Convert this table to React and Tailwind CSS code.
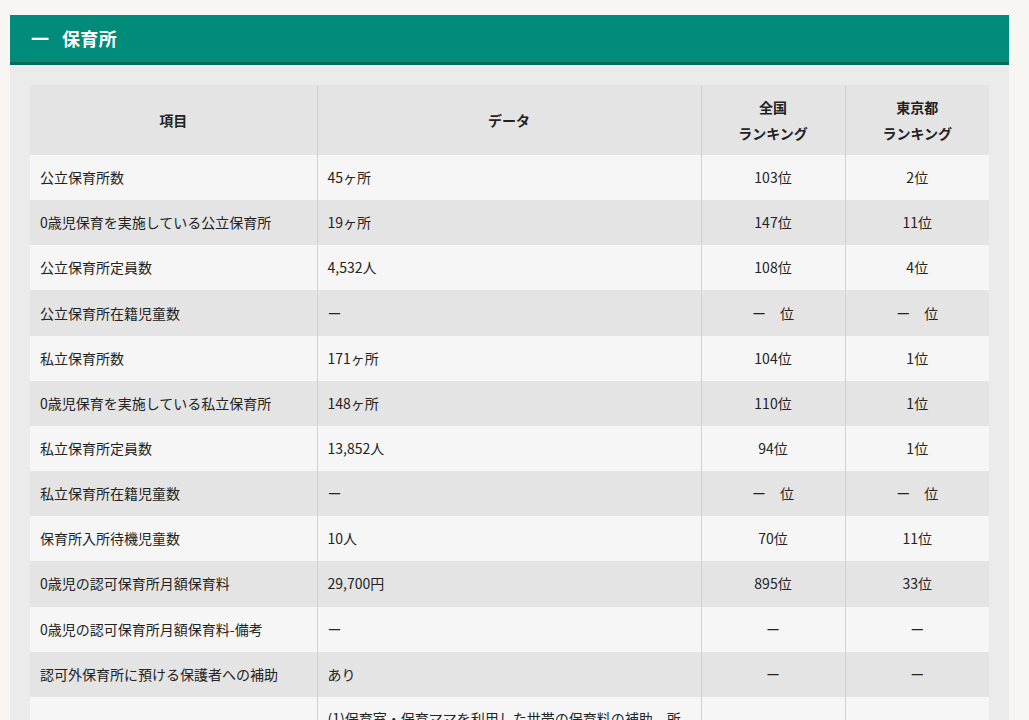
const rows = [
  ["公立保育所数", "45ヶ所", "103位", "2位"],
  ["0歳児保育を実施している公立保育所", "19ヶ所", "147位", "11位"],
  ["公立保育所定員数", "4,532人", "108位", "4位"],
  ["公立保育所在籍児童数", "ー", "ー　位", "ー　位"],
  ["私立保育所数", "171ヶ所", "104位", "1位"],
  ["0歳児保育を実施している私立保育所", "148ヶ所", "110位", "1位"],
  ["私立保育所定員数", "13,852人", "94位", "1位"],
  ["私立保育所在籍児童数", "ー", "ー　位", "ー　位"],
  ["保育所入所待機児童数", "10人", "70位", "11位"],
  ["0歳児の認可保育所月額保育料", "29,700円", "895位", "33位"],
  ["0歳児の認可保育所月額保育料-備考", "ー", "ー", "ー"],
  ["認可外保育所に預ける保護者への補助", "あり", "ー", "ー"],
];

const font = { fontFamily: '"Noto Sans CJK JP", "Noto Sans", sans-serif' };

export default function App() {
  return (
    <div className="min-h-screen bg-[#f7f6f2] pt-[15px] text-[#222]" style={font}>
      <div className="mx-[10px] w-[999px]">
        <div className="flex h-[50px] items-center gap-[13px] border-b-[3px] border-[#006b5c] bg-[#008b7b] px-[21px] text-[18px] font-bold text-white">
          <span>一</span>
          <span className="tracking-[0.02em]">保育所</span>
        </div>
        <div className="bg-[#ebebeb] px-[20px] pt-[20px] pb-[20px]">
          <table className="w-[959px] table-fixed border-collapse text-[14px]">
            <colgroup>
              <col className="w-[287px]" />
              <col className="w-[384px]" />
              <col className="w-[144px]" />
              <col className="w-[144px]" />
            </colgroup>
            <thead>
              <tr className="h-[70px] bg-[#e4e4e4] font-bold leading-[26px]">
                <th className="border-r border-[#d4d2cc] text-center">項目</th>
                <th className="border-r border-[#d4d2cc] text-center">データ</th>
                <th className="border-r border-[#d4d2cc] text-center">全国<br />ランキング</th>
                <th className="text-center">東京都<br />ランキング</th>
              </tr>
            </thead>
            <tbody>
              {rows.map((r, i) => (
                <tr key={i} className={`h-[45.17px] ${i % 2 === 0 ? "bg-[#f6f6f6]" : "bg-[#e4e4e4]"}`}>
                  <td className="border-r border-[#d4d2cc] px-[10px]">{r[0]}</td>
                  <td className="border-r border-[#d4d2cc] px-[10px]">{r[1]}</td>
                  <td className="border-r border-[#d4d2cc] text-center">{r[2]}</td>
                  <td className="text-center">{r[3]}</td>
                </tr>
              ))}
              <tr className="bg-[#f6f6f6] leading-[26px]">
                <td className="border-r border-[#d4d2cc] px-[10px]">認可外保育所に預ける保護者への補助-備考</td>
                <td className="border-r border-[#d4d2cc] px-[10px] py-[8px]">
                  (1)保育室・保育ママを利用した世帯の保育料の補助、所得に応じて月額最大で補助します。(2)認証保育所を利用した世帯の保育料の補助、月額で一律に補助します。(3)その他の認可外保育施設を利用した世帯への補助、所得に応じて補助します。
                </td>
                <td className="border-r border-[#d4d2cc] text-center">ー</td>
                <td className="text-center">ー</td>
              </tr>
            </tbody>
          </table>
        </div>
      </div>
    </div>
  );
}
